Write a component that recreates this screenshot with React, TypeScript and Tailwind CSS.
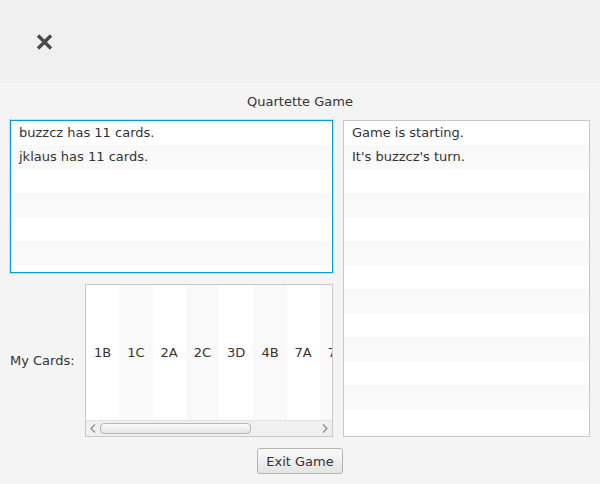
import React from 'react';

const leftRows = ['buzzcz has 11 cards.', 'jklaus has 11 cards.', '', '', '', '', ''];
const rightRows = ["Game is starting.", "It's buzzcz's turn.", '', '', '', '', '', '', '', '', '', '', '', ''];
const cards = ['1B', '1C', '2A', '2C', '3D', '4B', '7A', '7B'];

const ListView: React.FC<{ rows: string[] }> = ({ rows }) => (
  <div className="flex flex-col">
    {rows.map((r, i) => (
      <div
        key={i}
        className={`h-[24px] shrink-0 leading-[24px] px-[8px] whitespace-nowrap ${i % 2 === 0 ? 'bg-white' : 'bg-[#f9f9f9]'}`}
      >
        {r}
      </div>
    ))}
  </div>
);

const App: React.FC = () => {
  return (
    <div
      className="w-[600px] h-[484px] bg-[#f4f4f4] text-[13px] text-[#333333] flex flex-col overflow-hidden"
      style={{ fontFamily: '"DejaVu Sans", sans-serif' }}
    >
      <div className="h-[83px] shrink-0 bg-[#f0f0f0] flex items-center pl-[36px]">
        <svg width="17" height="16" viewBox="0 0 17 16">
          <path d="M2 1.5 L15 14.5 M15 1.5 L2 14.5" stroke="#4a4a4a" strokeWidth="3.4" strokeLinecap="butt" />
        </svg>
      </div>

      <div className="h-[37px] shrink-0 flex items-center justify-center pt-[1px]">Quartette Game</div>

      <div className="flex gap-[10px] px-[10px]">
        <div className="w-[323px] flex flex-col">
          <div className="h-[153px] border border-[#039ed3] shadow-[0_0_0_1px_#bfe3f3] bg-white overflow-hidden">
            <ListView rows={leftRows} />
          </div>
          <div className="flex items-center mt-[11px] h-[153px]">
            <div className="w-[75px] shrink-0 pt-[1px]">My Cards:</div>
            <div className="w-[248px] h-[153px] border border-[#c8c8c8] bg-white flex flex-col overflow-hidden">
              <div className="flex-1 flex overflow-hidden">
                {cards.map((c, i) => (
                  <div
                    key={c + i}
                    className={`shrink-0 flex items-center px-[8px] whitespace-nowrap ${i % 2 === 0 ? 'bg-white' : 'bg-[#f9f9f9]'}`}
                  >
                    {c}
                  </div>
                ))}
              </div>
              <div className="h-[16px] shrink-0 bg-[#f0f0f0] border-t border-[#e2e2e2] flex items-center">
                <div className="w-[14px] flex justify-center">
                  <svg width="6" height="9" viewBox="0 0 6 9">
                    <path d="M5 0.5 L1 4.5 L5 8.5" stroke="#8a8a8a" strokeWidth="1.2" fill="none" />
                  </svg>
                </div>
                <div className="w-[151px] h-[11px] rounded-[4px] border border-[#b8b8b8] bg-gradient-to-b from-[#fbfbfb] to-[#e4e4e4]" />
                <div className="flex-1" />
                <div className="w-[14px] flex justify-center">
                  <svg width="6" height="9" viewBox="0 0 6 9">
                    <path d="M1 0.5 L5 4.5 L1 8.5" stroke="#8a8a8a" strokeWidth="1.2" fill="none" />
                  </svg>
                </div>
              </div>
            </div>
          </div>
        </div>

        <div className="w-[248px] h-[317px] border border-[#c8c8c8] bg-white overflow-hidden">
          <ListView rows={rightRows} />
        </div>
      </div>

      <div className="flex justify-center mt-[11px]">
        <button className="h-[26px] px-[8px] rounded-[3px] border border-[#b5b5b5] bg-gradient-to-b from-[#fafafa] to-[#e4e4e4] text-[13px] text-[#333333] leading-none">
          Exit Game
        </button>
      </div>
    </div>
  );
};

export default App;
